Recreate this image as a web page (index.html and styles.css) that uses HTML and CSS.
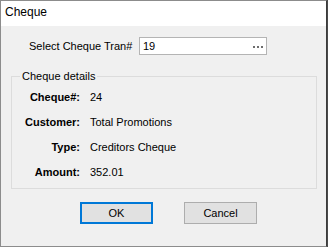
FILE: index.html
```html
<!DOCTYPE html>
<html lang="en">
<head>
<meta charset="UTF-8">
<title>Cheque</title>
<link rel="stylesheet" href="styles.css">
</head>
<body>

<div class="window">
  <div class="title-bar">Cheque</div>

  <div class="content">
    <div class="select-row">
      <span class="select-label">Select Cheque Tran#</span>
      <div class="picker">
        <span class="picker-value">19</span>
        <span class="picker-dots"><i></i><i></i><i></i></span>
      </div>
    </div>

    <fieldset class="details">
      <legend>Cheque details</legend>
      <div class="detail-grid">
        <span class="key">Cheque#:</span>
        <span class="val">24</span>
        <span class="key">Customer:</span>
        <span class="val">Total Promotions</span>
        <span class="key">Type:</span>
        <span class="val">Creditors Cheque</span>
        <span class="key">Amount:</span>
        <span class="val">352.01</span>
      </div>
    </fieldset>

    <div class="buttons">
      <button class="btn btn-default">OK</button>
      <button class="btn">Cancel</button>
    </div>
  </div>
</div>

</body>
</html>
```

FILE: styles.css
```css
/* Dialog window */
body {
  margin: 0;
  background-color: #4a4a4a;
  font-family: "Liberation Sans", Arial, sans-serif;
  font-size: 11px;
  color: #000;
}

.window {
  width: 325px;
  height: 245px;
  border: 1px solid #8c8c8c;
  border-right-color: #3c3c3c;
  background-color: #f0f0f0;
  display: flex;
  flex-direction: column;
}

.title-bar {
  height: 25px;
  line-height: 23px;
  padding-left: 4px;
  background-color: #fff;
  font-size: 12px;
}

.content {
  padding: 11px 10px 0 10px;
  display: flex;
  flex-direction: column;
}

/* Transaction picker */
.select-row {
  display: flex;
  align-items: center;
  padding-left: 18px;
  white-space: nowrap;
}

.select-label {
  width: 110px;
}

.picker {
  width: 120px;
  height: 16px;
  border: 1px solid #b4b4b4;
  background-color: #fff;
  display: flex;
  align-items: center;
  justify-content: space-between;
  padding: 0 3px 0 3px;
}

.picker-dots {
  display: flex;
  gap: 2px;
  margin-top: 1px;
}

.picker-dots i {
  width: 2px;
  height: 2px;
  background-color: #6d6d6d;
}

/* Group box */
.details {
  margin: 14px 0 0 0;
  padding: 6px 0 0 0;
  width: 306px;
  height: 120px;
  border: 1px solid #dcdcdc;
  box-sizing: border-box;
}

.details legend {
  margin-left: 8px;
  padding: 0 2px;
  line-height: 14px;
}

.detail-grid {
  display: grid;
  grid-template-columns: 68px auto;
  column-gap: 10px;
  row-gap: 8px;
  line-height: 17px;
}

.key {
  font-weight: bold;
  text-align: right;
}

/* Buttons */
.buttons {
  display: flex;
  gap: 31px;
  margin-top: 13px;
  padding-left: 69px;
}

.btn {
  width: 73px;
  height: 22px;
  font-family: inherit;
  font-size: 11px;
  background-color: #e1e1e1;
  border: 1px solid #adadad;
  padding: 0;
}

.btn-default {
  border: 2px solid #0078d7;
}
```
